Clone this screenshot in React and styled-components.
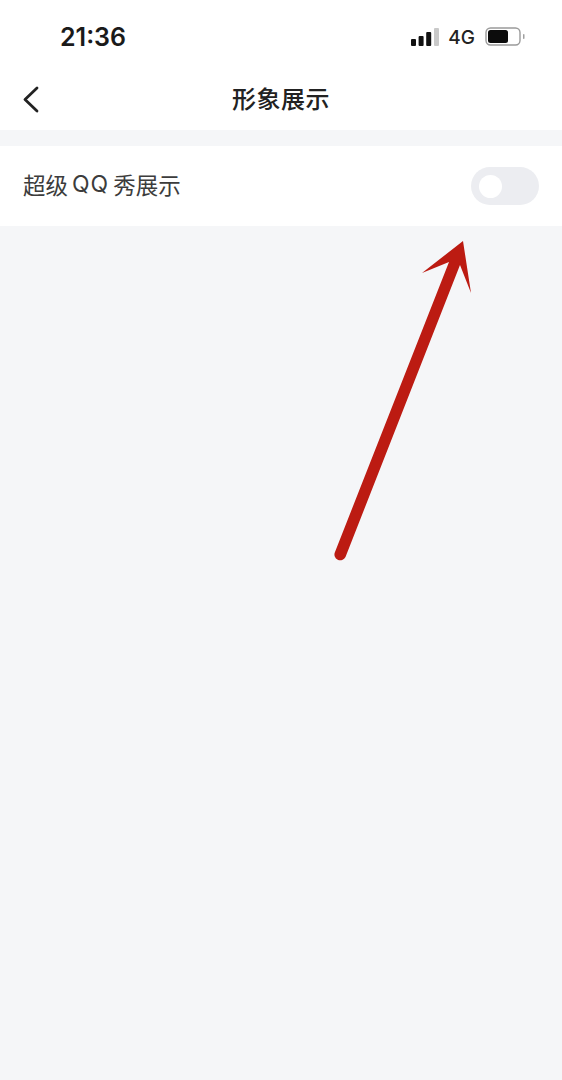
import React from "react";
import styled, { createGlobalStyle } from "styled-components";

const Global = createGlobalStyle`
  html, body { margin: 0; padding: 0; background: #f5f6f8; }
  body { font-family: "Liberation Sans", "Noto Sans CJK SC", sans-serif; }
`;

const Page = styled.div`
  position: relative;
  width: 562px;
  height: 1080px;
  overflow: hidden;
  background: #f5f6f8;
`;

const Header = styled.div`
  background: #fff;
  height: 130px;
`;

const StatusBar = styled.div`
  display: flex;
  align-items: center;
  justify-content: space-between;
  height: 74px;
  padding: 0 37px 0 60px;
`;

const Time = styled.div`
  font-family: "Inter", "Liberation Sans", sans-serif;
  font-size: 25px;
  font-weight: 600;
  color: #1a1a1a;
`;

const StatusIcons = styled.div`
  display: flex;
  align-items: center;
  gap: 10px;
`;

const Network = styled.span`
  margin-left: -1px;
  font-family: "Inter", "Liberation Sans", sans-serif;
  font-size: 19px;
  font-weight: 500;
  color: #222;
`;

const Nav = styled.div`
  position: relative;
  display: flex;
  align-items: center;
  justify-content: center;
  box-sizing: border-box;
  height: 52px;
  padding-bottom: 6px;
`;

const Back = styled.svg`
  position: absolute;
  left: 22px;
  top: 11px;
`;

const Title = styled.div`
  font-family: "Noto Sans CJK SC", sans-serif;
  font-size: 24px;
  font-weight: 500;
  letter-spacing: 0.5px;
  color: #222;
`;

const Row = styled.div`
  display: flex;
  align-items: center;
  justify-content: space-between;
  height: 80px;
  margin-top: 16px;
  padding: 0 23px;
  background: #fff;
`;

const Label = styled.div`
  display: flex;
  align-items: center;
  gap: 4px;
  padding-bottom: 4px;
  font-family: "Noto Sans CJK SC", sans-serif;
  font-size: 22.5px;
  color: #3c3c3c;
`;

const Latin = styled.span`
  font-family: "Inter", "Noto Sans", sans-serif;
  font-size: 23px;
  letter-spacing: 1px;
`;

const Toggle = styled.div`
  display: flex;
  align-items: center;
  width: 68px;
  height: 38px;
  padding-left: 8px;
  box-sizing: border-box;
  border-radius: 19px;
  background: #ecedf1;
`;

const Knob = styled.div`
  width: 23px;
  height: 23px;
  border-radius: 50%;
  background: #fff;
`;

const Arrow = styled.svg`
  position: absolute;
  left: 0;
  top: 0;
  pointer-events: none;
`;

const App = () => (
  <Page>
    <Global />
    <Header>
      <StatusBar>
        <Time>21:36</Time>
        <StatusIcons>
          <svg width="28" height="19" viewBox="0 0 28 19">
            <rect x="0" y="11" width="5" height="7" rx="1" fill="#111" />
            <rect x="7.6" y="8" width="5" height="10" rx="1" fill="#111" />
            <rect x="15.2" y="4" width="5" height="14" rx="1" fill="#111" />
            <rect x="23" y="0" width="5" height="18" rx="1" fill="#c9c9c9" />
          </svg>
          <Network>4G</Network>
          <svg width="40" height="20" viewBox="0 0 40 20">
            <rect x="1" y="1" width="34" height="17" rx="4.5" fill="none" stroke="#9a9a9a" strokeWidth="1.4" />
            <rect x="3" y="3" width="20" height="13" rx="2.5" fill="#0c0c0c" />
            <rect x="38" y="7" width="1.5" height="5" rx="0.7" fill="#a0a0a0" />
          </svg>
        </StatusIcons>
      </StatusBar>
      <Nav>
        <Back width="20" height="30" viewBox="0 0 20 30">
          <path d="M15 3 L3 14.5 L15 26" fill="none" stroke="#222" strokeWidth="2.8" strokeLinecap="round" strokeLinejoin="round" />
        </Back>
        <Title>形象展示</Title>
      </Nav>
    </Header>
    <Row>
      <Label>超级<Latin>QQ</Latin>秀展示</Label>
      <Toggle><Knob /></Toggle>
    </Row>
    <Arrow width="562" height="1080" viewBox="0 0 562 1080">
      <path
        d="M463 241 L422 273 L449 262 L335 552 A5.8 5.8 0 0 0 345.5 557 L460 265 L471 293 Z"
        fill="#bc1b12"
      />
    </Arrow>
  </Page>
);

export default App;
